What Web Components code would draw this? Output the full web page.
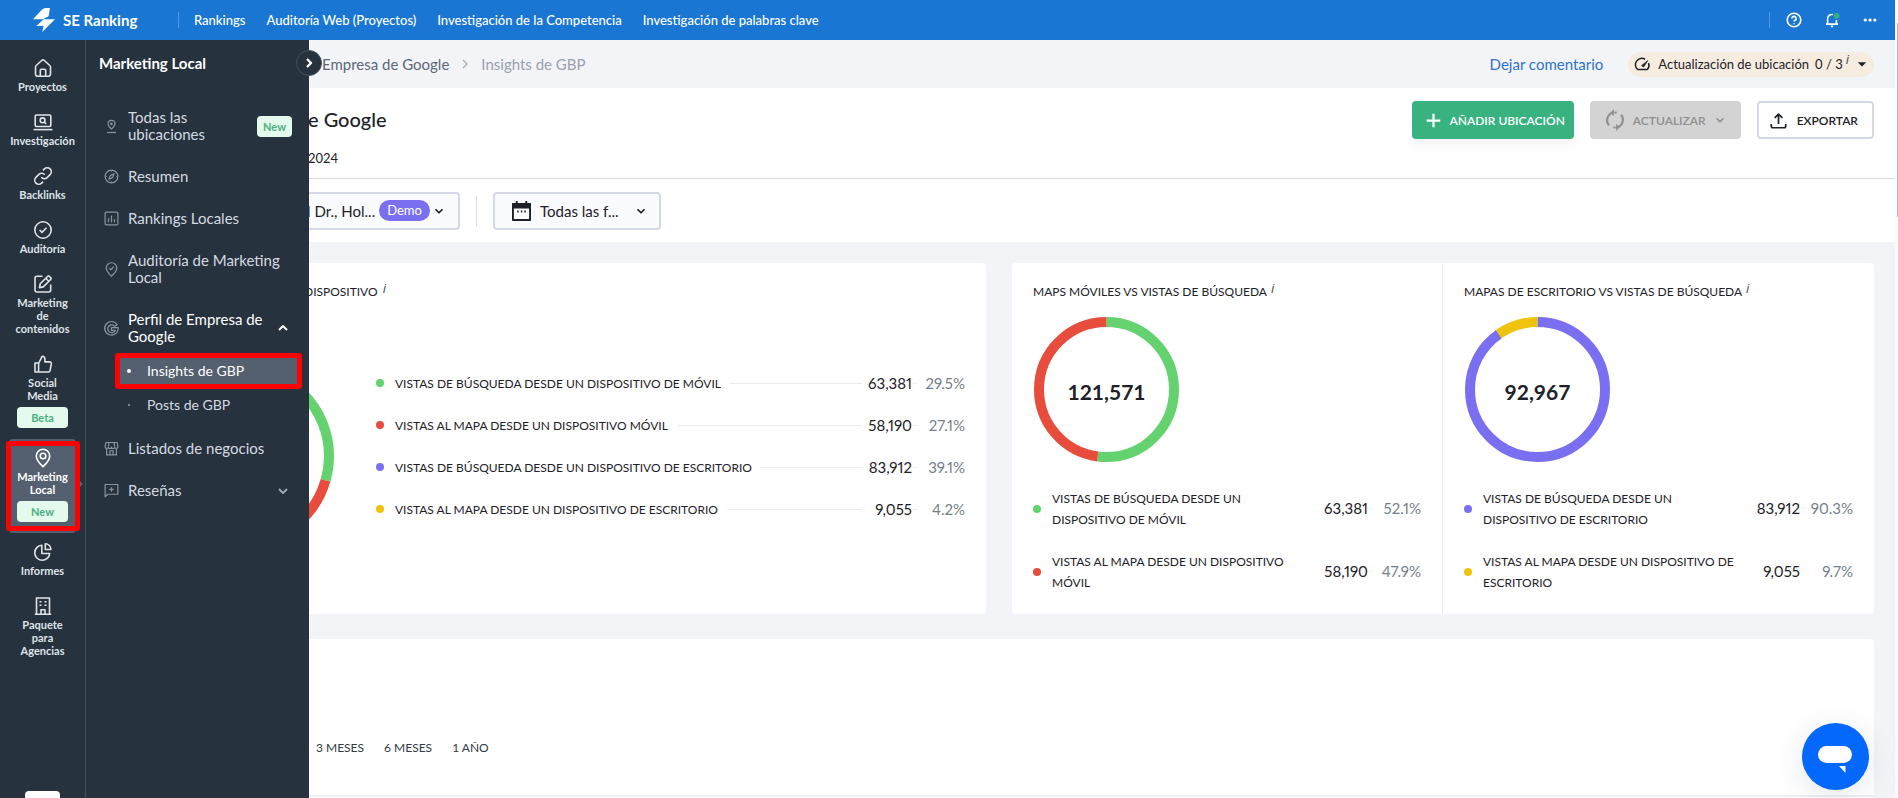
<!DOCTYPE html>
<html lang="es">
<head>
<meta charset="utf-8">
<meta name="viewport" content="width=device-width, initial-scale=1">
<title>Insights de GBP</title>
<style>
html,body{margin:0;height:100%;overflow:hidden}
body{font-family:Lato,"Open Sans",sans-serif;font-size:15px;color:#1d2129;background:#f3f4f8}
</style>
</head>
<body>
<app-shell>
  <top-bar slot="top"></top-bar>
  <side-rail slot="rail">
    <rail-item icon="home">Proyectos</rail-item>
    <rail-item icon="laptop">Investigación</rail-item>
    <rail-item icon="link">Backlinks</rail-item>
    <rail-item icon="check">Auditoría</rail-item>
    <rail-item icon="edit">Marketing de contenidos</rail-item>
    <rail-item icon="thumb" badge="Beta">Social Media</rail-item>
    <rail-item icon="pin" badge="New" current>Marketing Local</rail-item>
    <rail-item icon="pie">Informes</rail-item>
    <rail-item icon="building">Paquete para Agencias</rail-item>
  </side-rail>
  <side-panel slot="panel">
    <span slot="title">Marketing Local</span>
    <panel-item icon="pinbase" badge="New">Todas las ubicaciones</panel-item>
    <panel-item icon="compass">Resumen</panel-item>
    <panel-item icon="bars">Rankings Locales</panel-item>
    <panel-item icon="pincheck">Auditoría de Marketing Local</panel-item>
    <panel-item icon="google" chevron="up" open>Perfil de Empresa de Google</panel-item>
    <sub-menu>
      <sub-item current>Insights de GBP</sub-item>
      <sub-item>Posts de GBP</sub-item>
    </sub-menu>
    <panel-item icon="shop">Listados de negocios</panel-item>
    <panel-item icon="review" chevron="down">Reseñas</panel-item>
  </side-panel>
  <crumb-bar></crumb-bar>
  <title-bar></title-bar>
  <filter-bar></filter-bar>
  <card-grid>
    <device-card></device-card>
    <pair-card>
      <ring-panel total="121,571" colors="#64d26f,#e84c3d" share="52.1">
        <span slot="title">MAPS MÓVILES VS VISTAS DE BÚSQUEDA</span>
        <legend-row wrapped color="#64d26f" value="63,381" pct="52.1%">VISTAS DE BÚSQUEDA DESDE UN DISPOSITIVO DE MÓVIL</legend-row>
        <legend-row wrapped color="#e84c3d" value="58,190" pct="47.9%">VISTAS AL MAPA DESDE UN DISPOSITIVO MÓVIL</legend-row>
      </ring-panel>
      <ring-panel total="92,967" colors="#7a6ff0,#efc20b" share="90.3">
        <span slot="title">MAPAS DE ESCRITORIO VS VISTAS DE BÚSQUEDA</span>
        <legend-row wrapped color="#7a6ff0" value="83,912" pct="90.3%">VISTAS DE BÚSQUEDA DESDE UN DISPOSITIVO DE ESCRITORIO</legend-row>
        <legend-row wrapped color="#efc20b" value="9,055" pct="9.7%">VISTAS AL MAPA DESDE UN DISPOSITIVO DE ESCRITORIO</legend-row>
      </ring-panel>
    </pair-card>
    <period-card></period-card>
  </card-grid>
  <chat-button slot="chat"></chat-button>
</app-shell>
<script>
const ICONS = {
  home:'<path d="M2.500 9a2 2 0 0 1 .7-1.500l5.500-5a2 2 0 0 1 2.600 0l5.500 5a2 2 0 0 1 .7 1.500v7a2.300 2.300 0 0 1-2.300 2.300H4.800A2.300 2.300 0 0 1 2.500 16z"/><path d="M7.300 18v-5.500a1.200 1.200 0 0 1 1.200-1.200h3a1.200 1.200 0 0 1 1.200 1.200V18"/>',
  laptop:'<rect x="2.200" y="3" width="15.600" height="11.500" rx="1.200"/><path d="M.5 17.600h19"/><circle cx="9.600" cy="8.300" r="2.400"/><path d="m11.400 10.200 1.800 1.800"/>',
  link:'<path d="M8.300 11.300a4 4 0 0 0 5.800.3l3-3a4 4 0 0 0-5.700-5.700L9.900 4.400"/><path d="M11.700 8.700a4 4 0 0 0-5.800-.3l-3 3a4 4 0 0 0 5.700 5.700l1.500-1.500"/>',
  check:'<circle cx="10" cy="10" r="8.200"/><path d="m6.600 10 2.400 2.400 4.500-4.600"/>',
  edit:'<path d="M9.500 2.300H4a2 2 0 0 0-2 2V16a2 2 0 0 0 2 2h11.700a2 2 0 0 0 2-2v-5.500"/><path d="m7.200 9.800 7.600-7.600a1 1 0 0 1 1.400 0l1.700 1.700a1 1 0 0 1 0 1.400l-7.600 7.600-3.800.700z"/><path d="m12.800 4.300 3 3"/>',
  thumb:'<path d="M2 9h3.600v9H2zM5.600 9.500l3.600-7.300c1.600 0 2.700 1.200 2.700 2.700v3h4.700c1.200 0 1.900.9 1.700 2l-1.200 6.500c-.1.900-.9 1.600-1.800 1.600H5.600"/>',
  pin:'<path d="M10 18.700C6 15 3.300 11.800 3.300 8a6.700 6.700 0 0 1 13.400 0c0 3.800-2.700 7-6.700 10.700z"/><circle cx="10" cy="8" r="2.800"/>',
  pie:'<path d="M8.800 3.300a7.500 7.500 0 1 0 7.900 8.200H8.800z"/><path d="M12.300 1.800v5.700h5.600a5.600 5.600 0 0 0-5.600-5.700z"/>',
  building:'<path d="M3.500 18V2h13v16M1.800 18.200h16.400M8 18v-4.300h4V18"/><path d="M6.500 5.800h2M11.500 5.800h2M6.500 9.300h2M11.500 9.300h2"/>',
  pinbase:'<path d="M10 13.300c-3-2.600-4.600-4.600-4.600-7a4.600 4.600 0 0 1 9.200 0c0 2.400-1.600 4.400-4.600 7z"/><circle cx="10" cy="6.500" r=".9"/><path d="M4 18h12"/>',
  compass:'<circle cx="10" cy="10" r="8.500"/><path d="m13.500 6.500-2 5-5 2 2-5zM10 10h.1M10 2v1.500M10 16.500V18M2 10h1.500M16.500 10H18"/>',
  bars:'<rect x="1.500" y="1.500" width="17" height="17" rx="1.500"/><path d="M6 15V9.500M10 15V6M14 15v-4"/>',
  pincheck:'<path d="M10 19C6 15.200 3 12.200 3 8a7 7 0 0 1 14 0c0 4.200-3 7.200-7 11z"/><path d="m7 8.200 2.200 2.100 3.800-4"/>',
  google:'<path d="M17.500 4.800 14.500 7.300a5.200 5.200 0 1 0 .5 5.200h-5V8.800h8.900a9 9 0 1 1-1.400-4z"/>',
  shop:'<path d="M3.500 9.500v9h13v-9M2.500 2h15l1 5.500a2 2 0 0 1-4.200.5 2.100 2.100 0 0 1-4.300 0 2.100 2.100 0 0 1-4.300 0 2 2 0 0 1-4.200-.5zM8 18v-5h4v5M6.500 2.500 6 7M13.500 2.500 14 7"/>',
  review:'<path d="M1.500 18.500V2h17v13H5z"/><path d="M10 5.500v6M7 8.500h6"/>',
  up:'<path d="m5 12.500 5-5 5 5"/>',
  down:'<path d="m5 7.500 5 5 5-5"/>',
  right:'<path d="m7.500 5 5 5-5 5"/>',
  help:'<circle cx="10" cy="10" r="8.500"/><path d="M7.400 8.100a2.600 2.600 0 1 1 3.900 2.200c-.9.500-1.300.9-1.300 1.700M10 14.200v1"/>',
  bell:'<path d="M2.500 15.200h15M4.500 15V8.500A5.300 5.300 0 0 1 11 3.300M15.500 15v-5M8.500 18h3"/><circle cx="15.800" cy="4.700" r="2.600" fill="#38b37f" stroke="#38b37f"/>',
  dots:'<path d="M4 10h.1M10 10h.1M16 10h.1" stroke-linecap="round" stroke-width="4"/>',
  gauge:'<path d="M3.300 16.500A8.500 8.500 0 0 1 13.500 3M18 8a8.500 8.500 0 0 1-1.300 8.500H3.300"/><path d="M8.700 11.500 17 4.800l-5.500 8.500z" fill="currentColor" stroke-width="1"/>',
  caret:'<path d="M3 7h14l-7 7z" fill="currentColor" stroke="none"/>',
  plus:'<path d="M10 1v18M1 10h18"/>',
  sync:'<path d="M8.500 3.200A7.200 7.200 0 0 0 4.500 14.800M11.500 16.800A7.200 7.200 0 0 0 15.500 5.200"/><path d="M9 0v6.500L5.800 3.300zM11 20v-6.500l3.200 3.200z" fill="currentColor" stroke="none"/><path d="M9.500 3.200a7 7 0 0 1 2 .2M10.500 16.800a7 7 0 0 1-2-.2"/>',
  upload:'<path d="M10 14V2.500M5.500 7 10 2.500 14.500 7M1.500 14v2.500a2 2 0 0 0 2 2h13a2 2 0 0 0 2-2V14"/>',
  calendar:'<path d="M1 3h18v17H1zM5 0v4M15 0v4" /><path d="M1 3h18v4H1z" fill="currentColor"/><path d="M5.500 11h1.500M9.300 11h1.500M13 11h1.500"/>',
  logo:'<path d="M0 9.400 8 .6Q9.500-1 11.500-1h3.900l-1.200 7.600L9 9.400zM9.700 9.400h10.300L8.400 21l1.200-5.600H3z" fill="currentColor" stroke="none"/>'
};
const define = (tag, css, html) => customElements.define(tag, class extends HTMLElement {
  connectedCallback() {
    if (this.shadowRoot) return;
    const root = this.attachShadow({mode:'open'});
    root.innerHTML = `<style>*,:host{box-sizing:border-box}a{color:inherit;text-decoration:none}button,select{font:inherit;color:inherit;cursor:pointer}${css}</style>` +
      (typeof html === 'function' ? html(this) : html);
  }
});

define('ui-icon', ':host{display:block;flex:none;width:var(--s,20px);height:var(--s,20px)}svg{display:block;width:100%;height:100%;overflow:visible}',
  e => `<svg viewBox="0 0 20 20" fill="none" stroke="currentColor" stroke-width="${e.getAttribute('w') || 1.6}" stroke-linejoin="round" aria-hidden="true">${ICONS[e.getAttribute('name')]}</svg>`);

define('ui-badge', ':host{display:flex;align-items:center;justify-content:center;flex:none;height:21px;border-radius:4px;background:#e3faec;color:#4caf83;font-size:11px;font-weight:700;line-height:13px}', '<slot></slot>');

define('info-mark', ':host{display:block;font-family:"Open Sans",sans-serif;font-size:13px;font-style:italic;font-weight:400;line-height:12px;color:#3f4954}', 'i');

define('app-shell', `
  :host{display:grid;grid-template-columns:minmax(0,1fr) 3px;height:100vh;overflow:hidden;position:relative}
  .app{display:grid;grid-template-rows:40px minmax(0,1fr);min-height:0}
  .body{display:flex;min-height:0}
  main{flex:1;min-width:0;margin-left:-8px;overflow:hidden}
  .scroll{background:#fafafa;padding:23px 0 0 2px}
  .thumb{height:25%;background:#b4b7bd;border-radius:1px}
  .chat{position:absolute;right:29px;bottom:8px;z-index:5}`,
  `<div class="app"><slot name="top"></slot><div class="body"><slot name="rail"></slot><slot name="panel"></slot><main><slot></slot></main></div></div>
   <div class="scroll"><div class="thumb"></div></div><div class="chat"><slot name="chat"></slot></div>`);

define('top-bar', `
  :host{display:block;background:#1976d3;color:#fff;font-size:13px;font-weight:500}
  header{display:flex;align-items:center;height:39px;padding:0 17px 0 33px}
  .brand{display:flex;align-items:center;gap:8px;font-size:15px;font-weight:700;width:145px}
  .brand ui-icon{--s:22px}
  nav{display:flex;gap:21px;border-left:1px solid #5297dd;padding-left:15px;line-height:16px;white-space:nowrap}
  .tools{display:flex;gap:22px;margin-left:auto;border-left:1px solid #5297dd;padding-left:16px}
  button{background:none;border:0;padding:0;display:block}
  .tools ui-icon{--s:16px}`,
  `<header><a class="brand" href="#"><ui-icon name="logo"></ui-icon><span>SE Ranking</span></a>
  <nav><a href="#">Rankings</a><a href="#">Auditoría Web (Proyectos)</a><a href="#">Investigación de la Competencia</a><a href="#">Investigación de palabras clave</a></nav>
  <div class="tools"><button aria-label="Ayuda"><ui-icon name="help" w="2"></ui-icon></button><button aria-label="Notificaciones"><ui-icon name="bell" w="2"></ui-icon></button><button aria-label="Más"><ui-icon name="dots"></ui-icon></button></div></header>`);

define('side-rail', `
  :host{display:flex;flex-direction:column;width:86px;flex:none;background:#26323e;border-right:1px solid #434f5a;padding-top:9px;position:relative;z-index:3}
  nav{flex:1}
  .foot{width:35px;height:7px;margin-left:25px;background:#fff;border-radius:4px 4px 0 0}`,
  '<nav><slot></slot></nav><div class="foot"></div>');

define('rail-item', `
  :host{display:block;position:relative;color:#dfe3e8}
  a{display:flex;flex-direction:column;align-items:center;margin:0 9px;padding:9px 0 10px;border-radius:4px}
  .label{margin-top:2px;width:min-content;text-align:center;font-size:11px;line-height:13px;font-weight:700}
  ui-badge{width:51px;margin:5px 0 1px}
  :host([current]){color:#fff}
  :host([current]) a{background:#546070}
  :host([current])::before{content:"";position:absolute;left:6px;right:5px;top:2px;bottom:2px;border:5px solid #f00;border-radius:3px}
  :host([current])::after{content:"";position:absolute;right:2px;top:42px;border:3px solid transparent;border-left-color:#546070;border-right:0}`,
  e => `<a href="#"><ui-icon name="${e.getAttribute('icon')}"></ui-icon><span class="label"><slot></slot></span>${e.hasAttribute('badge') ? `<ui-badge>${e.getAttribute('badge')}</ui-badge>` : ''}</a>`);

define('side-panel', `
  :host{display:block;width:223px;flex:none;background:#26323e;color:#d5dae0;position:relative;z-index:2}
  h2{margin:0;padding:13px 13px 24px;font-size:15px;line-height:20px;font-weight:700;color:#fff}
  button{position:absolute;right:-13px;top:10px;width:26px;height:26px;padding:0;border:1px solid #46525e;border-radius:50%;background:#26323e;color:#fff;display:grid;place-items:center}
  button ui-icon{--s:16px}`,
  '<h2><slot name="title"></slot></h2><button aria-label="Contraer menú"><ui-icon name="right" w="3"></ui-icon></button><nav><slot></slot></nav>');

define('panel-item', `
  :host{display:block}
  a{display:flex;align-items:center;gap:9px;min-height:42px;padding:12px 17px 13px 18px;font-size:15px;line-height:17px}
  .icon{--s:15px;color:#8b949e}
  .text{flex:1}
  ui-badge{width:35px}
  .chev{--s:16px;margin-right:1px;color:#a0a8b0}
  :host([open]){color:#fff}
  :host([open]) a{padding-bottom:9px}
  :host([open]) .chev{color:#fff}`,
  e => `<a href="#"><ui-icon class="icon" name="${e.getAttribute('icon')}"></ui-icon><span class="text"><slot></slot></span>${e.hasAttribute('badge') ? `<ui-badge>${e.getAttribute('badge')}</ui-badge>` : ''}${e.hasAttribute('chevron') ? `<ui-icon class="chev" w="2.4" name="${e.getAttribute('chevron')}"></ui-icon>` : ''}</a>`);

define('sub-menu', ':host{display:block;padding:0 8px 6px 30px}', '<slot></slot>');
define('sub-item', `
  :host{display:block;color:#d5dae0;font-size:14px;line-height:18px}
  a{display:flex;align-items:center;height:34px;padding-left:11px}
  a::before{content:"";width:2px;height:2px;margin:0 17px 0 1px;background:#9aa3ac;border-radius:50%}
  :host([current]){color:#fff}
  :host([current]) a{background:#546070;outline:5px solid #f00;outline-offset:-4px;border-radius:2px}
  :host([current]) a::before{width:4px;height:4px;margin:0 16px 0 0;background:#fff}`,
  '<a href="#"><slot></slot></a>');

define('crumb-bar', `
  :host{display:flex;align-items:center;height:48px;padding:0 21px;background:#f3f4f8;font-size:15px;line-height:20px;color:#5b6878}
  nav{display:flex;align-items:center;gap:8px}
  nav ui-icon{--s:16px;color:#a5acb6}
  .here{color:#98a1ad}
  .feedback{margin-left:auto;color:#2f73c8}
  button{display:flex;align-items:center;height:25px;margin-left:25px;padding:0 6px 0 7px;border:0;border-radius:13px;background:#f6ede0;font-size:13px;color:#1d2129}
  button .g{--s:15px;margin-right:8px} button b{font-weight:400;margin:0 3px 0 6px} button info-mark{margin:0 7px 10px 0} .c{--s:12px}`,
  `<nav aria-label="Ruta"><a href="#">Empresa de Google</a><ui-icon name="right"></ui-icon><span class="here">Insights de GBP</span></nav>
  <a class="feedback" href="#">Dejar comentario</a>
  <button><ui-icon class="g" name="gauge" w="2"></ui-icon><span>Actualización de ubicación</span><b>0 / 3</b><info-mark></info-mark><ui-icon class="c" name="caret"></ui-icon></button>`);

define('title-bar', `
  :host{display:flex;justify-content:space-between;height:91px;padding:13px 21px 0 7px;background:#fff;border-bottom:1px solid #d6d8e6}
  h1{margin:4px 0 17px;font-size:20px;line-height:28px;font-weight:500}
  p{margin:0;font-size:13px;line-height:16px}
  .actions{display:flex;gap:16px}
  button{display:flex;align-items:center;height:38px;border:0;border-radius:4px;font-size:12px;font-weight:600;white-space:nowrap}
  .add{background:#38b37f;color:#fff;padding:0 9px 0 14px;gap:9px;box-shadow:0 8px 10px #1d21290a}
  .add ui-icon{--s:15px}
  .upd{background:#d3d3d3;color:#8f8f8f;padding:0 14px 0 14px;gap:7px}
  .upd ui-icon{--s:22px} .upd .d{--s:14px}
  .exp{background:#fff;border:2px solid #d5d8e6;padding:0 14px 0 11px;gap:10px}
  .exp ui-icon{--s:17px}`,
  `<div><h1>e Google</h1><p>2024</p></div><div class="actions">
  <button class="add"><ui-icon name="plus" w="3"></ui-icon>AÑADIR UBICACIÓN</button>
  <button class="upd" disabled><ui-icon name="sync" w="2"></ui-icon>ACTUALIZAR<ui-icon class="d" name="down" w="2.500"></ui-icon></button>
  <button class="exp"><ui-icon name="upload" w="2"></ui-icon>EXPORTAR</button></div>`);

define('filter-bar', `
  :host{display:flex;align-items:center;height:63px;background:#fff}
  .box{display:flex;align-items:center;height:38px;border:2px solid #d5d8e6;border-radius:4px;background:#fafbfc}
  select{appearance:none;border:0;background:none;padding:0;font-size:15px;height:20px}
  .place{width:159px;padding:0 12px 0 6px;border-left:0}
  .place select{width:73px}
  .demo{flex:none;width:51px;height:21px;border-radius:11px;background:#7a6ff0;color:#fff;font-size:13px;line-height:20px;text-align:center}
  .box ui-icon{--s:14px} .box .cal{--s:19px;margin-right:9px}
  .place ui-icon{margin-left:2px}
  i{width:1px;height:30px;background:#d6d8e6;margin:0 16px}
  .dates{width:168px;padding:0 11px 0 17px}
  .dates select{flex:1}`,
  `<label class="box place"><select aria-label="Ubicación"><option>l Dr., Hol...</option></select><span class="demo">Demo</span><ui-icon name="down" w="2.500"></ui-icon></label><i></i>
  <label class="box dates"><ui-icon class="cal" name="calendar" w="2"></ui-icon><select aria-label="Fechas"><option>Todas las f...</option></select><ui-icon name="down" w="2.500"></ui-icon></label>`);

define('card-grid', `
  :host{display:grid;grid-template-columns:minmax(0,685fr) minmax(0,862fr);gap:25px 26px;padding:21px 21px 0 0}`, '<slot></slot>');

define('donut-chart', `
  :host{display:grid;place-items:center;flex:none}
  svg,b{grid-area:1/1} svg{display:block;width:var(--d);height:var(--d)}
  b{font-size:21px;line-height:28px;font-weight:700;padding-top:4px}`,
  e => {
    const size = +e.getAttribute('size'), r = size / 2 - 5, colors = e.getAttribute('colors').split(',');
    let from = 0;
    const arcs = e.getAttribute('shares').split(',').map((s, i) => {
      const arc = `<circle cx="${size/2}" cy="${size/2}" r="${r}" pathLength="100" stroke="${colors[i]}" stroke-dasharray="${s} 100" stroke-dashoffset="${-from}"/>`;
      from += +s; return arc;
    }).join('');
    return `<svg style="--d:${size}px" viewBox="0 0 ${size} ${size}" fill="none" stroke-width="10"><g transform="rotate(-90 ${size/2} ${size/2})">${arcs}</g></svg>${e.hasAttribute('total') ? `<b>${e.getAttribute('total')}</b>` : ''}`;
  });

define('legend-row', `
  :host{display:flex;align-items:center;height:42px;font-size:12px;line-height:21px;color:#1d2129}
  span{flex:none}
  .dot{width:8px;height:8px;border-radius:50%;margin-right:11px}
  .line{flex:1;height:1px;background:#ececef;margin:0 7px 0 9px}
  .val,.pct{font-size:15px;font-variant-numeric:proportional-nums}
  .val{width:43px;display:flex;justify-content:flex-end}
  .tick{width:4px;height:1px;background:#ececef;margin-left:1px}
  .pct{width:48px;text-align:right;color:#75818a}
  :host([wrapped]){height:63px}
  :host([wrapped]) .text{flex:0 1 256px}
  :host([wrapped]) .line{flex:0 0 0;margin:0;margin-left:auto}`,
  e => `<span class="dot" style="background:${e.getAttribute('color')}"></span><span class="text"><slot></slot></span><span class="line"></span><span class="val">${e.getAttribute('value')}</span><span class="tick"></span><span class="pct">${e.getAttribute('pct')}</span>`);

define('device-card', `
  :host{display:block;height:351px;background:#fff;border-radius:0 4px 4px 0;overflow:hidden}
  h3{display:flex;margin:0;padding:19px 0 0 3px;font-size:12px;line-height:20px;font-weight:400}
  h3 info-mark{margin-left:5px}
  .row{display:flex;align-items:center;padding-right:21px;margin-top:61px}
  .ring{width:33px;margin-right:42px;display:flex;justify-content:flex-end}
  .legend{flex:1;margin-top:-20px}`,
  `<h3>DISPOSITIVO<info-mark></info-mark></h3>
  <div class="row"><div class="ring"><donut-chart size="186" colors="#64d26f,#e84c3d,#7a6ff0,#efc20b" shares="29.5,27.1,39.2,4.2"></donut-chart></div>
  <div class="legend">
    <legend-row color="#64d26f" value="63,381" pct="29.5%">VISTAS DE BÚSQUEDA DESDE UN DISPOSITIVO DE MÓVIL</legend-row>
    <legend-row color="#e84c3d" value="58,190" pct="27.1%">VISTAS AL MAPA DESDE UN DISPOSITIVO MÓVIL</legend-row>
    <legend-row color="#7a6ff0" value="83,912" pct="39.1%">VISTAS DE BÚSQUEDA DESDE UN DISPOSITIVO DE ESCRITORIO</legend-row>
    <legend-row color="#efc20b" value="9,055" pct="4.2%">VISTAS AL MAPA DESDE UN DISPOSITIVO DE ESCRITORIO</legend-row>
  </div></div>`);

define('pair-card', ':host{display:grid;grid-template-columns:430fr 432fr;height:351px;background:#fff;border-radius:4px}::slotted(:last-child){border-left:1px solid #ececf1}', '<slot></slot>');

define('ring-panel', `
  :host{display:block;padding:19px 21px 0}
  h3{display:flex;margin:0;font-size:12px;line-height:20px;font-weight:400;white-space:nowrap}
  h3 info-mark{margin-left:4px}
  donut-chart{width:145px;margin:15px 0 15px 1px}`,
  e => `<h3><slot name="title"></slot><info-mark></info-mark></h3><donut-chart size="145" total="${e.getAttribute('total')}" colors="${e.getAttribute('colors')}" shares="${e.getAttribute('share')},${100 - e.getAttribute('share')}"></donut-chart><slot></slot>`);

define('period-card', `
  :host{display:block;grid-column:1/-1;height:220px;background:#fff;border-radius:0 4px 0 0}
  div{display:flex;gap:20px;height:158px;padding:100px 0 0 15px;border-bottom:2px solid #f1f1f3}
  button{border:0;background:none;padding:0;height:18px;font-size:12px;line-height:18px;color:#333b46}`,
  '<div><button>3 MESES</button><button>6 MESES</button><button>1 AÑO</button></div>');

define('chat-button', `
  :host{display:block}
  button{display:grid;place-items:center;width:67px;height:67px;border:0;border-radius:50%;background:#0568fd;padding:0;box-shadow:0 6px 30px #1d30501f}
  svg{display:block}`,
  '<button aria-label="Chat"><svg width="67" height="67" viewBox="0 0 67 67" fill="#fff"><rect x="16" y="23" width="34" height="17" rx="8.500"/><path d="M37 43h6.500v7z"/></svg></button>');
</script>
</body>
</html>
